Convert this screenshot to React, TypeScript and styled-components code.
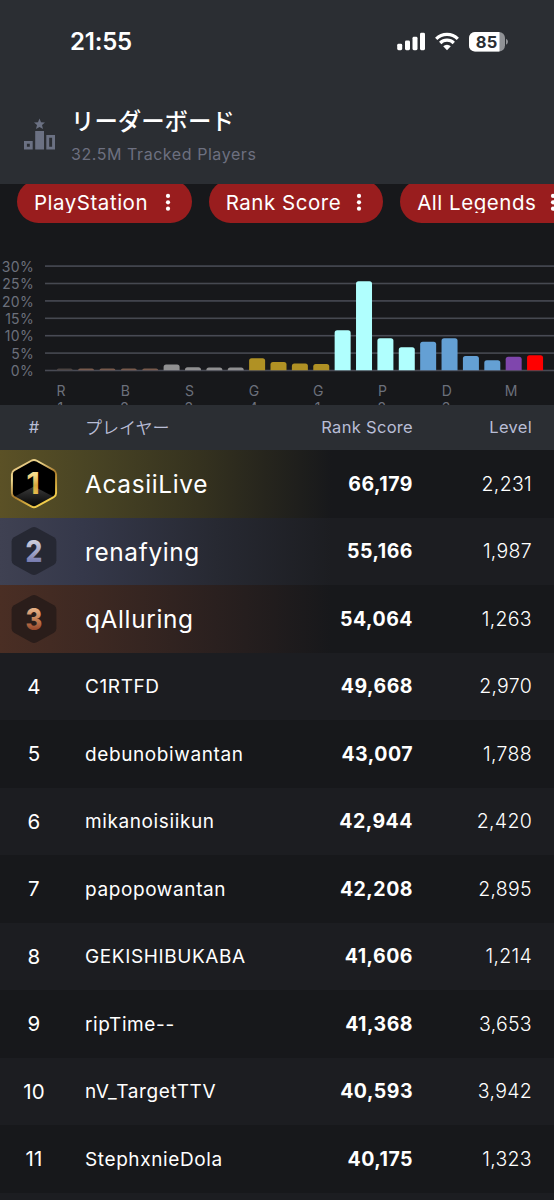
import React from "react";
import styled, { createGlobalStyle, css } from "styled-components";

const Global = createGlobalStyle`
  *, *::before, *::after { box-sizing: border-box; }
  html, body { margin: 0; padding: 0; background: #17181b; }
  body { overflow: hidden; font-family: Inter, "Noto Sans CJK JP", sans-serif; color: #fff; }
`;

const Screen = styled.main`
  width: 554px;
  height: 1200px;
  overflow: hidden;
  display: flex;
  flex-direction: column;
  background: #17181b;
`;

const StatusBar = styled.div`
  flex: none;
  height: 83px;
  padding: 0 46px 0 70px;
  display: flex;
  align-items: center;
  justify-content: space-between;
  background: #2b2e33;
`;

const Clock = styled.span`
  font-size: 24px;
  font-weight: 580;
  line-height: 30px;
  letter-spacing: -0.2px;
`;

const StatusIcons = styled.svg`
  display: block;
  flex: none;
`;

const Header = styled.header`
  flex: none;
  height: 101px;
  padding: 20px 24px 0;
  display: flex;
  background: #2b2e33;
`;

const HeaderIcon = styled.svg`
  display: block;
  flex: none;
  margin: 15px 15px 0 0;
`;

const Title = styled.h1`
  margin: 0;
  font-family: "Noto Sans CJK JP", sans-serif;
  font-size: 23.4px;
  font-weight: 500;
  line-height: 34px;
`;

const Subtitle = styled.p`
  margin: 6px 0 0;
  font-size: 16px;
  font-weight: 440;
  line-height: 22px;
  letter-spacing: 0.56px;
  color: #6d7080;
`;

const Filters = styled.nav`
  flex: none;
  height: 56px;
  padding-left: 17px;
  display: flex;
  align-items: flex-start;
  gap: 17px;
  overflow: hidden;
`;

const Chip = styled.button<{ $width: number }>`
  flex: none;
  width: ${(p) => p.$width}px;
  height: 43px;
  margin: -4px 0 0;
  padding: 0 21px 0 17px;
  border: 0;
  border-radius: 22px;
  display: flex;
  align-items: center;
  justify-content: space-between;
  background: #991d1e;
  color: #fff;
  font-family: inherit;
`;

const ChipLabel = styled.span`
  height: 22px;
  overflow: hidden;
  font-size: 20.5px;
  font-weight: 440;
  line-height: 24px;
  letter-spacing: 0.52px;
  white-space: nowrap;
`;

const Chart = styled.svg`
  display: block;
  flex: none;
`;

const columns = css`
  display: grid;
  grid-template-columns: 68px 1fr 140px 119px;
  align-items: center;
  padding-right: 22px;
`;

const TableHead = styled.div`
  flex: none;
  height: 45px;
  ${columns}
  padding-bottom: 2px;
  background: #2b2e33;
  color: #b9bdd6;
  font-size: 16.5px;
  font-weight: 440;
  letter-spacing: 0.3px;
`;

const tints = {
  gold: "linear-gradient(90deg, #5b5126 0%, #4a4524 25%, #35321f 60%, rgba(23,24,27,0) 100%)",
  silver: "linear-gradient(90deg, #3f4152 0%, #35384a 25%, #272932 65%, rgba(28,29,33,0) 100%)",
  bronze: "linear-gradient(90deg, #4a2e24 0%, #3c2822 30%, #2a201f 65%, rgba(23,24,27,0) 100%)",
};
type Tint = keyof typeof tints;

const Row = styled.div<{ $alt: boolean; $tint?: Tint }>`
  flex: none;
  height: 67.5px;
  ${columns}
  background-color: ${(p) => (p.$alt ? "#1c1d21" : "#17181b")};
  ${(p) =>
    p.$tint &&
    css`
      background-image: ${tints[p.$tint]};
      background-size: 332px 100%;
      background-repeat: no-repeat;
    `}
`;

const Rank = styled.span`
  display: flex;
  justify-content: center;
  font-size: 20.5px;
  font-weight: 430;
  letter-spacing: 0.2px;
`;

const Name = styled.span<{ $large?: boolean }>`
  padding: 1px 0 0 17px;
  font-size: ${(p) => (p.$large ? 24.4 : 19)}px;
  font-weight: 430;
  letter-spacing: ${(p) => (p.$large ? 0.65 : 0.61)}px;
  white-space: nowrap;
`;

const HeadName = styled(Name)`
  padding-top: 0;
  font-family: "Noto Sans CJK JP", sans-serif;
  font-size: 17px;
  font-weight: 350;
  letter-spacing: 0;
`;

const Num = styled.span<{ $bold?: boolean }>`
  text-align: right;
  font-size: 19.5px;
  font-weight: ${(p) => (p.$bold ? 650 : 320)};
  letter-spacing: ${(p) => (p.$bold ? 0.5 : 0.3)}px;
`;

const HeadCell = styled.span<{ $center?: boolean }>`
  text-align: ${(p) => (p.$center ? "center" : "right")};
`;

const BAR_COLORS = {
  rookie: "#4b4341",
  bronze: "#785a4c",
  silver: "#909091",
  gold: "#b09124",
  platinum: "#b0fffe",
  diamond: "#64a0d4",
  master: "#7f46ad",
  predator: "#ff0000",
};

const bars: [keyof typeof BAR_COLORS, number][] = [
  ["rookie", 2], ["bronze", 2], ["bronze", 2], ["bronze", 2], ["bronze", 2],
  ["silver", 6], ["silver", 3.3], ["silver", 2.9], ["silver", 2.9],
  ["gold", 12.2], ["gold", 8.6], ["gold", 7], ["gold", 6.5],
  ["platinum", 40.3], ["platinum", 89.3], ["platinum", 32.3], ["platinum", 23.3],
  ["diamond", 28.8], ["diamond", 32.3], ["diamond", 14.4], ["diamond", 10.3],
  ["master", 13.8], ["predator", 15.2],
];

const ticks = ["R1", "B2", "S3", "G4", "G1", "P2", "D3", "M"];
const percents = [30, 25, 20, 15, 10, 5, 0];

function Distribution() {
  const base = 130.5;
  return (
    <Chart width="554" height="165" viewBox="0 0 554 165" fontFamily="Inter, sans-serif" fontSize="14" fill="#6c707b">
      {percents.map((p, i) => {
        const y = base - (p / 5) * 17.4;
        return (
          <g key={p}>
            <text x="34" y={y + 5.6} textAnchor="end" letterSpacing="0.3">{p}%</text>
            <rect x="45" y={y - 0.8} width="509" height="1.6" fill={i % 2 ? "#464951" : "#484a54"} />
          </g>
        );
      })}
      {bars.map(([tier, h], i) => {
        const x = 56.7 + i * 21.38;
        const r = Math.min(2.5, h);
        return (
          <path
            key={i}
            d={`M${x} ${base - 0.3}V${base - h + r}q0 ${-r} ${r} ${-r}h${16 - 2 * r}q${r} 0 ${r} ${r}V${base - 0.3}z`}
            fill={BAR_COLORS[tier]}
          />
        );
      })}
      {ticks.map((t, i) => (
        <text key={t} y="155.8" textAnchor="middle">
          <tspan x={61 + i * 64.3}>{t[0]}</tspan>
          {t[1] && <tspan x={60.3 + i * 64.3} dy="17.2">{t[1]}</tspan>}
        </text>
      ))}
    </Chart>
  );
}

const Kebab = () => (
  <svg width="6" height="18" viewBox="0 0 6 18" fill="#fff">
    <circle cx="3" cy="2.9" r="2.1" />
    <circle cx="3" cy="9.3" r="2.1" />
    <circle cx="3" cy="15.7" r="2.1" />
  </svg>
);

const badgeStops: Record<Tint, [string, string, string]> = {
  gold: ["#f7dc8c", "#d6a840", "#e7bd4c"],
  silver: ["#c9cbda", "#a0a3c6", "#777cb0"],
  bronze: ["#e3ad82", "#c07a50", "#97482c"],
};
const badgeFill: Record<Tint, string> = { gold: "#000", silver: "#262833", bronze: "#2a1d1a" };

function Badge({ rank, tint }: { rank: number; tint: Tint }) {
  const [a, b, c] = badgeStops[tint];
  const hex = "M21.2 1.8Q24 .3 26.8 1.8L44 11.3Q46.4 12.7 46.4 15.5V34.5Q46.4 37.3 44 38.7L26.8 48.2Q24 49.7 21.2 48.2L4 38.7Q1.6 37.3 1.6 34.5V15.5Q1.6 12.7 4 11.3Z";
  return (
    <svg width="48" height="50" viewBox="0 0 48 50">
      <defs>
        <linearGradient id={`digit-${tint}`} x1="0" y1="0" x2="0" y2="1">
          <stop offset="0.25" stopColor={a} />
          <stop offset="0.55" stopColor={b} />
          <stop offset="0.8" stopColor={c} />
        </linearGradient>
        <linearGradient id="ring" x1="0" y1="0" x2="0.6" y2="1">
          <stop offset="0" stopColor="#cfa566" />
          <stop offset="0.3" stopColor="#f1dc91" />
          <stop offset="0.6" stopColor="#a87a2c" />
          <stop offset="1" stopColor="#f4d04c" />
        </linearGradient>
        <linearGradient id="facet" x1="0" y1="0" x2="0" y2="1">
          <stop offset="0" stopColor="#3b3b3b" />
          <stop offset="1" stopColor="#050505" />
        </linearGradient>
      </defs>
      {tint === "gold" ? (
        <g transform="translate(24 24.6) scale(0.985) translate(-24 -25)">
          <path d={hex} fill={badgeFill.gold} />
          <path d="M24 28L45.5 39L26 48.5H22L2.5 39Z" fill="url(#facet)" />
          <path d={hex} fill="none" stroke="url(#ring)" strokeWidth="2" />
        </g>
      ) : (
        <path d={hex} fill={badgeFill[tint]} />
      )}
      <text
        x={rank === 1 ? 23.2 : 24}
        y={rank === 1 ? 35.4 : 35.8}
        textAnchor="middle"
        fontFamily="Inter, sans-serif"
        fontSize="30"
        fontWeight={rank === 1 ? 700 : 800}
        textLength={rank === 1 ? 14 : 17}
        lengthAdjust="spacingAndGlyphs"
        fill={`url(#digit-${tint})`}
      >
        {rank}
      </text>
    </svg>
  );
}

const players: [string, string, string, Tint?][] = [
  ["AcasiiLive", "66,179", "2,231", "gold"],
  ["renafying", "55,166", "1,987", "silver"],
  ["qAlluring", "54,064", "1,263", "bronze"],
  ["C1RTFD", "49,668", "2,970"],
  ["debunobiwantan", "43,007", "1,788"],
  ["mikanoisiikun", "42,944", "2,420"],
  ["papopowantan", "42,208", "2,895"],
  ["GEKISHIBUKABA", "41,606", "1,214"],
  ["ripTime--", "41,368", "3,653"],
  ["nV_TargetTTV", "40,593", "3,942"],
  ["StephxnieDola", "40,175", "1,323"],
];

const filters: [string, number][] = [["PlayStation", 174.7], ["Rank Score", 174.5], ["All Legends", 177]];

export default function App() {
  return (
    <>
      <Global />
      <Screen>
        <StatusBar>
          <Clock>21:55</Clock>
          <StatusIcons width="111" height="20" viewBox="0 0 111 20" fill="#fff">
            <rect x="0.2" y="11.8" width="5" height="6.4" rx="1.4" />
            <rect x="8" y="8.5" width="5" height="9.7" rx="1.4" />
            <rect x="15.5" y="4.8" width="5" height="13.4" rx="1.4" />
            <rect x="23" y="0.8" width="5" height="17.4" rx="1.4" />
            <g fill="none" stroke="#fff" strokeWidth="3.2">
              <path d="M39.2 6.8A15.2 15.2 0 0 1 60.8 6.8" />
              <path d="M43.2 11A9.7 9.7 0 0 1 56.8 11" />
            </g>
            <path d="M46.2 14.3A5.5 5.5 0 0 1 53.8 14.3L50 18.2Z" />
            <clipPath id="cell"><rect x="72" y="0" width="36" height="19.6" rx="6" /></clipPath>
            <g clipPath="url(#cell)">
              <rect x="72" y="0" width="36" height="20" fill="#909296" />
              <rect x="72" y="0" width="30.5" height="20" />
            </g>
            <path d="M109 6.8Q111 7.8 111 9.8T109 12.8Z" fill="#909296" />
            <text x="89.7" y="15.8" textAnchor="middle" fontFamily="Inter, sans-serif" fontSize="16.5" fontWeight="650" letterSpacing="0.3" fill="#2b2e33">85</text>
          </StatusIcons>
        </StatusBar>
        <Header>
          <HeaderIcon width="32" height="32" viewBox="0 0 32 32" fill="#6b7183">
            <path d="M15.5 0.5l1.5 3.7 4 .3-3 2.6 1 3.9-3.5-2.1-3.5 2.1 1-3.9-3-2.6 4-.3z" />
            <rect x="11.2" y="13" width="8.8" height="18.5" />
            <path fillRule="evenodd" d="M0 23h8.7v8.5H0zM2.9 25.8v2.9h2.9v-2.9z" />
            <path fillRule="evenodd" d="M22.3 17H31v14.5h-8.7zM25.2 19.8v8.9h2.9v-8.9z" />
          </HeaderIcon>
          <div>
            <Title>リーダーボード</Title>
            <Subtitle>32.5M Tracked Players</Subtitle>
          </div>
        </Header>
        <Filters>
          {filters.map(([label, width]) => (
            <Chip key={label} $width={width}>
              <ChipLabel>{label}</ChipLabel>
              <Kebab />
            </Chip>
          ))}
        </Filters>
        <Distribution />
        <TableHead>
          <HeadCell $center>#</HeadCell>
          <HeadName>プレイヤー</HeadName>
          <HeadCell>Rank Score</HeadCell>
          <HeadCell>Level</HeadCell>
        </TableHead>
        {players.map(([name, score, level, tint], i) => (
          <Row key={name} $alt={i % 2 === 1} $tint={tint}>
            <Rank>{tint ? <Badge rank={i + 1} tint={tint} /> : i + 1}</Rank>
            <Name $large={!!tint}>{name}</Name>
            <Num $bold>{score}</Num>
            <Num>{level}</Num>
          </Row>
        ))}
        <Row $alt />
      </Screen>
    </>
  );
}
